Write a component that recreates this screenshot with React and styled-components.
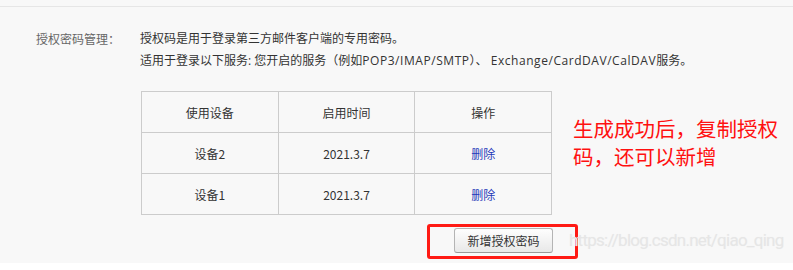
import React from "react";
import styled, { createGlobalStyle } from "styled-components";

const Global = createGlobalStyle`
  html, body { margin: 0; padding: 0; background: #ffffff; }
  body { font-family: "Noto Sans CJK SC", "Noto Sans", sans-serif; }
`;

const Page = styled.div`
  position: relative;
  width: 793px;
  height: 263px;
  background: #f8f8f8;
  padding-top: 6px;
  box-sizing: border-box;
  overflow: hidden;
`;

const TopRule = styled.div`
  height: 1px;
  background: #e6e6e6;
`;

const Section = styled.div`
  display: flex;
  padding: 21px 0 0 36px;
`;

const Label = styled.div`
  width: 104px;
  flex: none;
  font-size: 12px;
  line-height: 22px;
  color: #666;
`;

const Content = styled.div`
  display: flex;
  flex-direction: column;
`;

const Line = styled.div`
  font-family: "Open Sans", "Noto Sans CJK SC", sans-serif;
  font-size: 12px;
  line-height: 22px;
  color: #333;
  white-space: nowrap;
`;

const Latin = styled.span`
  letter-spacing: 0.55px;
`;

const TableRow = styled.div`
  display: flex;
  align-items: flex-start;
  margin-top: 19px;
`;

const Table = styled.table`
  border-collapse: collapse;
  width: 411px;
  table-layout: fixed;
  margin-left: 1px;
`;

const Cell = styled.td`
  border: 1px solid #cccccc;
  height: 40px;
  padding: 0;
  text-align: center;
  font-size: 12px;
  color: ${(p) => (p.$link ? "#1f38b8" : "#333")};
`;

const Note = styled.div`
  margin: 23px 0 0 21px;
  width: 215px;
  font-size: 20.5px;
  line-height: 28px;
  color: #ff1010;
`;

const ButtonRow = styled.div`
  display: flex;
  justify-content: flex-end;
  width: 413px;
  margin-top: 13px;
`;

const Button = styled.button`
  position: relative;
  width: 99px;
  height: 25px;
  padding: 0;
  border: 1px solid #b4b4b4;
  border-bottom-color: #999;
  border-radius: 3px;
  background: linear-gradient(#fefefe, #e8e8e8);
  font-family: inherit;
  font-size: 12px;
  color: #333;
`;

const Highlight = styled.span`
  position: absolute;
  left: -28px;
  top: -5px;
  right: -26px;
  bottom: -7px;
  border: 3px solid #ff1a14;
  border-radius: 3px;
  pointer-events: none;
`;

const Watermark = styled.div`
  position: absolute;
  left: 569px;
  top: 227px;
  font-family: Roboto, "Liberation Sans", sans-serif;
  font-size: 17px;
  letter-spacing: -0.75px;
  line-height: 26px;
  color: #e6e6e6;
  text-shadow: 0 0 1px #f0f0f0;
  white-space: nowrap;
`;

const rows = [
  { device: "设备2", date: "2021.3.7" },
  { device: "设备1", date: "2021.3.7" },
];

export default function App() {
  return (
    <>
      <Global />
      <Page>
        <TopRule />
        <Section>
          <Label>授权密码管理：</Label>
          <Content>
            <Line>授权码是用于登录第三方邮件客户端的专用密码。</Line>
            <Line>
              适用于登录以下服务: 您开启的服务（例如<Latin>POP3/IMAP/SMTP</Latin>）、 <Latin>Exchange/CardDAV/CalDAV</Latin>服务。
            </Line>
            <TableRow>
              <Table>
                <tbody>
                  <tr>
                    <Cell>使用设备</Cell>
                    <Cell>启用时间</Cell>
                    <Cell>操作</Cell>
                  </tr>
                  {rows.map((r) => (
                    <tr key={r.device}>
                      <Cell>{r.device}</Cell>
                      <Cell>{r.date}</Cell>
                      <Cell $link>删除</Cell>
                    </tr>
                  ))}
                </tbody>
              </Table>
              <Note>生成成功后，复制授权码，还可以新增</Note>
            </TableRow>
            <ButtonRow>
              <Button>
                新增授权密码
                <Highlight />
              </Button>
            </ButtonRow>
          </Content>
        </Section>
        <Watermark>https://blog.csdn.net/qiao_qing</Watermark>
      </Page>
    </>
  );
}
